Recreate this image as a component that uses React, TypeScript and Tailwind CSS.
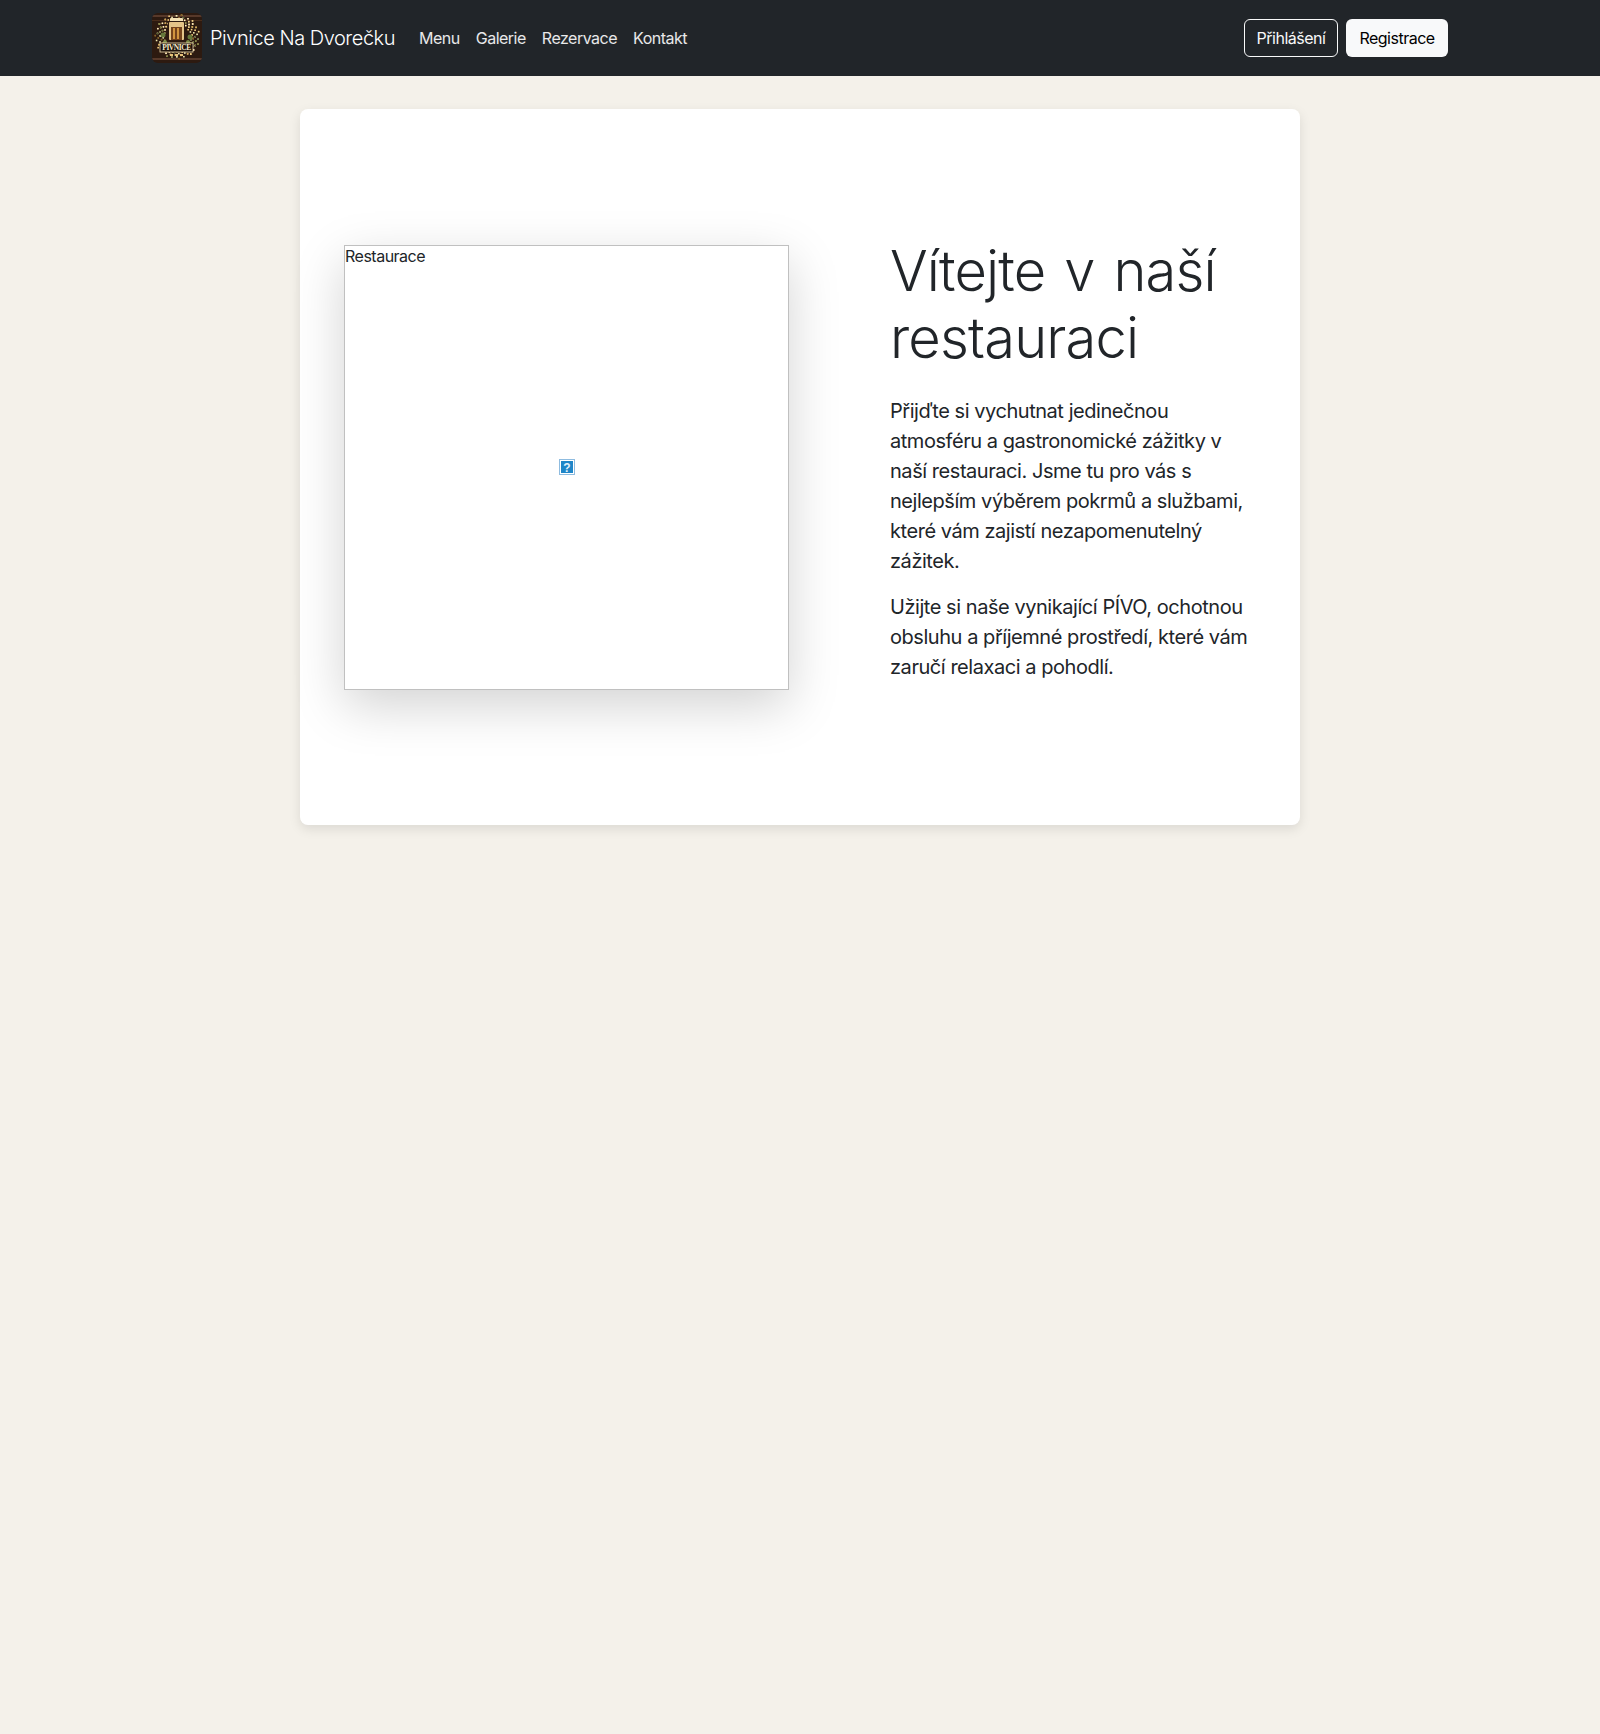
const navLinks = ['Menu', 'Galerie', 'Rezervace', 'Kontakt'];

// speckled wreath around the mug: [x, y, colour]
const wreath: [number, number, string][] = [];
const wreathColors = ['#f0cf86', '#f8e8b8', '#6d7a3a', '#d09a44', '#8a5a24', '#fff3d0', '#f0cf86', '#55652e'];
for (let i = 0; i < 260; i++) {
  const angle = (i * 2.399) % (Math.PI * 2);
  const radius = 13 + ((i * 13) % 10);
  wreath.push([
    24.5 + Math.cos(angle) * radius,
    23 + Math.sin(angle) * radius,
    wreathColors[(i * 3 + (i % 5)) % wreathColors.length],
  ]);
}

function Logo() {
  return (
    <svg width="50" height="50" viewBox="0 0 50 50" className="rounded-md shrink-0">
      <rect width="50" height="50" fill="#2d1a10" />
      <rect y="2" width="50" height="2" fill="#57392a" />
      <rect y="7" width="50" height="1" fill="#4a2d1b" />
      <rect y="45" width="50" height="2" fill="#57392a" />
      {wreath.map(([x, y, c], i) => (
        <rect key={i} x={x} y={y} width="1.5" height="1.5" fill={c} />
      ))}
      <circle cx="11" cy="22" r="2.5" fill="#66783a" />
      <circle cx="38" cy="24" r="2.5" fill="#66783a" />
      <circle cx="13" cy="29" r="2" fill="#7b8a45" />
      <circle cx="36" cy="29" r="2" fill="#7b8a45" />
      <rect x="18" y="5" width="13" height="4" rx="1" fill="#f4e2b4" />
      <rect x="16" y="8" width="17" height="20" rx="2" fill="#2d1a10" />
      <rect x="17" y="9" width="15" height="18" rx="1" fill="#e4c488" />
      <rect x="19" y="14" width="11" height="13" fill="#74431c" />
      <rect x="21" y="15" width="2" height="11" fill="#d2953f" />
      <rect x="25" y="15" width="2" height="11" fill="#d2953f" />
      <rect x="8" y="30" width="33" height="9" fill="#1d120c" stroke="#f0dcae" strokeWidth="0.8" />
      <text x="24.5" y="37" textAnchor="middle" fontSize="7.5" fontWeight="700" fill="#f7ebcb" fontFamily="Liberation Serif, serif">
        PIVNICE
      </text>
      <rect x="18" y="41" width="3" height="2" fill="#e8c27a" />
      <rect x="23" y="41" width="3" height="2" fill="#e8c27a" />
      <rect x="28" y="41" width="3" height="2" fill="#e8c27a" />
    </svg>
  );
}

function BrokenImageIcon() {
  return (
    <svg width="16" height="16" viewBox="0 0 16 16">
      <rect width="16" height="16" fill="#8fbce0" />
      <rect x="1" y="1" width="14" height="14" fill="#ffffff" />
      <rect x="2" y="2" width="12" height="12" fill="#1f86c8" />
      <text x="8" y="12.7" textAnchor="middle" fontSize="12" fontWeight="700" fill="#e4f2fb" fontFamily="Liberation Sans, sans-serif">
        ?
      </text>
    </svg>
  );
}

export default function App() {
  return (
    <div className="min-h-[1734px] bg-[#f4f1ea] font-['Inter',sans-serif] text-[#212529]">
      <nav className="h-[76px] bg-[#212529]">
        <div className="mx-auto flex h-full w-[1320px] items-center px-3">
          <a className="flex items-center text-xl font-light text-white tracking-[-0.47px]">
            <Logo />
            <span className="ml-2">Pivnice Na Dvorečku</span>
          </a>
          <ul className="ml-6 flex items-center gap-4 text-base text-white/90 tracking-[-0.5px]">
            {navLinks.map((link) => (
              <li key={link}>{link}</li>
            ))}
          </ul>
          <div className="ml-auto flex gap-2 text-base tracking-[-0.5px]">
            <button className="h-[38px] w-[94px] rounded-md border border-[#f8f9fa] text-[#f8f9fa]">Přihlášení</button>
            <button className="h-[38px] w-[102px] rounded-md bg-[#f8f9fa] text-black">Registrace</button>
          </div>
        </div>
      </nav>

      <main className="mx-auto mt-[33px] h-[716px] w-[1000px] rounded-lg bg-white px-11 shadow-[0_4px_12px_rgba(0,0,0,0.1)]">
        <div className="flex h-full items-center justify-between">
          <div className="relative h-[445px] w-[445px] border border-[#c0c0c0] leading-5 shadow-[0_16px_48px_rgba(0,0,0,0.175)]">
            <span className="block tracking-[-0.5px]">Restaurace</span>
            <div className="absolute left-1/2 top-1/2 -translate-x-1/2 -translate-y-1/2">
              <BrokenImageIcon />
            </div>
          </div>
          <div className="w-[366px] pb-[14px]">
            <h1 className="mb-6 text-[56px] font-light leading-[67px] tracking-[-0.85px] [word-spacing:4px]">Vítejte v naší restauraci</h1>
            <p className="mb-4 text-xl leading-[30px] tracking-[-0.45px]">
              Přijďte si vychutnat jedinečnou atmosféru a gastronomické zážitky v naší restauraci. Jsme tu pro vás s nejlepším výběrem pokrmů a službami, které vám zajistí nezapomenutelný zážitek.
            </p>
            <p className="text-xl leading-[30px] tracking-[-0.45px]">
              Užijte si naše vynikající PÍVO, ochotnou obsluhu a příjemné prostředí, které vám zaručí relaxaci a pohodlí.
            </p>
          </div>
        </div>
      </main>
    </div>
  );
}
